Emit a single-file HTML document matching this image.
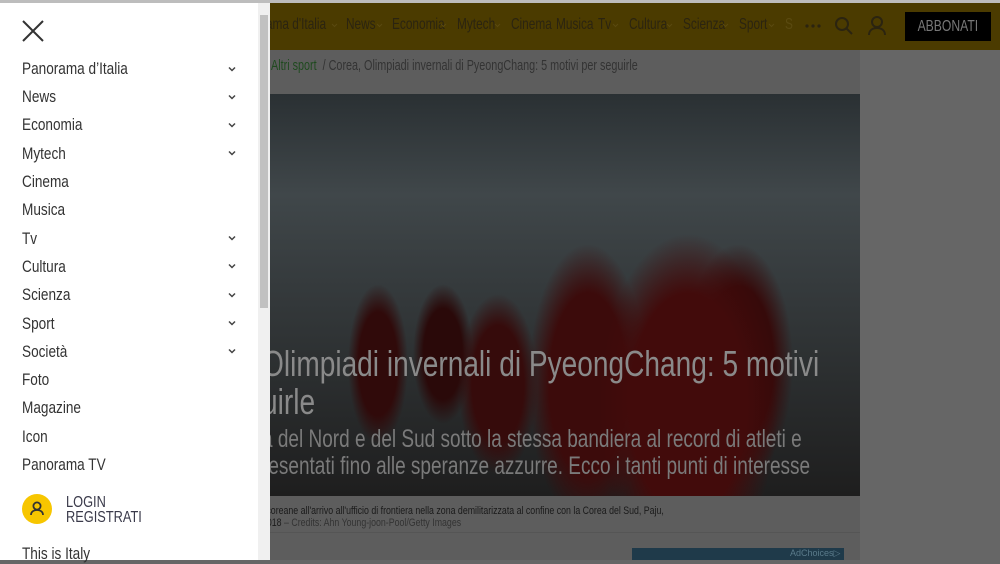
<!DOCTYPE html>
<html><head><meta charset="utf-8"><style>
*{margin:0;padding:0;box-sizing:border-box}
body{width:1000px;height:560px;overflow:hidden;background:#666;font-family:"Liberation Sans",sans-serif;position:relative}
.top{position:absolute;left:0;top:0;width:1000px;height:3px;background:#bdbdbd}
.hdr{position:absolute;left:258px;top:3px;width:742px;height:47px;background:#4b3b00}
.n{position:absolute;top:16px;font-size:16px;color:#2b2410;white-space:nowrap;transform:scaleX(.74);transform-origin:left}
.c{position:absolute;top:23px;width:7px;height:5px}
.btn{position:absolute;left:905px;top:12px;width:86px;height:29px;background:#000;color:#777;text-align:center;line-height:29px}
.btn span{display:inline-block;font-size:16px;transform:scaleX(.76)}
.content{position:absolute;left:258px;top:50px;width:602px;height:510px;background:#5d5d5d}
.crumb{position:absolute;left:262px;top:57px;font-size:15px;color:#333;white-space:nowrap;transform:scaleX(.72);transform-origin:left}
.crumb b{font-weight:normal;color:#1f4a1f}
.hero{position:absolute;left:258px;top:94px;width:602px;height:402px;overflow:hidden;
background:
radial-gradient(ellipse 90px 170px at 430px 310px,#420b0b 65%,transparent 100%),
radial-gradient(ellipse 60px 140px at 330px 290px,#3c0b0b 65%,transparent 100%),
radial-gradient(ellipse 55px 120px at 480px 270px,#360a0a 65%,transparent 100%),
radial-gradient(ellipse 40px 90px at 240px 290px,#360b0b 65%,transparent 100%),
radial-gradient(ellipse 30px 80px at 120px 270px,#300a0a 65%,transparent 100%),
radial-gradient(ellipse 30px 70px at 185px 260px,#2a0909 65%,transparent 100%),
linear-gradient(180deg,#2a3033 0%,#40474a 25%,#34393b 50%,#1e1e1e 100%)}
.hl{position:absolute;white-space:nowrap;color:#8a8a8a;transform-origin:left}
.menu{position:absolute;left:0;top:3px;width:258px;height:557px;background:#fff;z-index:5}
.sb{position:absolute;left:258px;top:3px;width:12px;height:557px;background:#f0f0f0;z-index:5}
.sb div{position:absolute;left:2px;top:12px;width:8px;height:293px;background:#c1c1c1}
.mi{position:absolute;left:22px;font-size:17px;color:#333;white-space:nowrap;transform:scaleX(.8);transform-origin:left}
.ch{position:absolute;left:227px;width:10px;height:10px}
</style></head><body>
<div class="top"></div>
<div class="hdr"></div>
<div class="n" style="left:262px">rama d'Italia</div>
<div class="n" style="left:346px">News</div>
<div class="n" style="left:392px">Economia</div>
<div class="n" style="left:457px">Mytech</div>
<div class="n" style="left:511px">Cinema</div>
<div class="n" style="left:556px">Musica</div>
<div class="n" style="left:598px">Tv</div>
<div class="n" style="left:629px">Cultura</div>
<div class="n" style="left:683px">Scienza</div>
<div class="n" style="left:739px">Sport</div>
<div class="n" style="left:785px;color:#5a4a10">S</div>
<svg class="c" style="left:331px" viewBox="0 0 7 5"><path d="M1 1l2.5 2.5L6 1" fill="none" stroke="#5a4a10"/></svg>
<svg class="c" style="left:376px" viewBox="0 0 7 5"><path d="M1 1l2.5 2.5L6 1" fill="none" stroke="#5a4a10"/></svg>
<svg class="c" style="left:440px" viewBox="0 0 7 5"><path d="M1 1l2.5 2.5L6 1" fill="none" stroke="#5a4a10"/></svg>
<svg class="c" style="left:494px" viewBox="0 0 7 5"><path d="M1 1l2.5 2.5L6 1" fill="none" stroke="#5a4a10"/></svg>
<svg class="c" style="left:612px" viewBox="0 0 7 5"><path d="M1 1l2.5 2.5L6 1" fill="none" stroke="#5a4a10"/></svg>
<svg class="c" style="left:666px" viewBox="0 0 7 5"><path d="M1 1l2.5 2.5L6 1" fill="none" stroke="#5a4a10"/></svg>
<svg class="c" style="left:722px" viewBox="0 0 7 5"><path d="M1 1l2.5 2.5L6 1" fill="none" stroke="#5a4a10"/></svg>
<svg class="c" style="left:768px" viewBox="0 0 7 5"><path d="M1 1l2.5 2.5L6 1" fill="none" stroke="#5a4a10"/></svg>
<svg style="position:absolute;left:805px;top:24px" width="16" height="4" viewBox="0 0 16 4"><circle cx="2" cy="2" r="1.6" fill="#2b2410"/><circle cx="8" cy="2" r="1.6" fill="#2b2410"/><circle cx="14" cy="2" r="1.6" fill="#2b2410"/></svg>
<svg style="position:absolute;left:834px;top:16px" width="20" height="20" viewBox="0 0 20 20"><circle cx="8" cy="8" r="6" fill="none" stroke="#2b2410" stroke-width="2"/><path d="M12.5 12.5L18 18" stroke="#2b2410" stroke-width="2"/></svg>
<svg style="position:absolute;left:867px;top:15px" width="20" height="22" viewBox="0 0 20 22"><circle cx="10" cy="7" r="5" fill="none" stroke="#2b2410" stroke-width="2"/><path d="M2 20c0-5 4-7 8-7s8 2 8 7" fill="none" stroke="#2b2410" stroke-width="2"/></svg>
<div class="btn"><span>ABBONATI</span></div>
<div class="content"></div>
<div class="crumb">/ &nbsp;<b>Altri sport</b> &nbsp;/ Corea, Olimpiadi invernali di PyeongChang: 5 motivi per seguirle</div>
<div class="hero"></div>
<div class="hl" style="left:262px;top:343px;font-size:36px;transform:scaleX(.78)">Olimpiadi invernali di PyeongChang: 5 motivi</div>
<div class="hl" style="left:262px;top:381px;font-size:36px;transform:scaleX(.78)">uirle</div>
<div class="hl" style="left:262px;top:425px;font-size:25px;color:#7a7a7a;transform:scaleX(.76)">a del Nord e del Sud sotto la stessa bandiera al record di atleti e</div>
<div class="hl" style="left:262px;top:452px;font-size:25px;color:#7a7a7a;transform:scaleX(.76)">resentati fino alle speranze azzurre. Ecco i tanti punti di interesse</div>
<div style="position:absolute;left:262px;top:505px;font-size:11px;color:#1a1a1a;line-height:12px;white-space:nowrap;transform:scaleX(.8);transform-origin:left">l coreane all'arrivo all'ufficio di frontiera nella zona demilitarizzata al confine con la Corea del Sud, Paju,<br>2018 <span style="color:#333">– Credits: Ahn Young-joon-Pool/Getty Images</span></div>
<div style="position:absolute;left:270px;top:532px;width:590px;height:1px;background:#555"></div>
<div style="position:absolute;left:632px;top:548px;width:212px;height:12px;background:#1f3a4a"></div>
<div style="position:absolute;left:790px;top:548px;font-size:9px;color:#5a7a8a">AdChoices▷</div>

<div class="menu">
<svg style="position:absolute;left:22px;top:17px" width="22" height="22" viewBox="0 0 22 22"><path d="M1 1L21 21M21 1L1 21" stroke="#333" stroke-width="2"/></svg>
</div>
<div class="sb"><div></div></div>
<div style="position:absolute;left:0;top:0;z-index:6">
<div class="mi" style="top:59px">Panorama d’Italia</div>
<div class="mi" style="top:87px">News</div>
<div class="mi" style="top:115px">Economia</div>
<div class="mi" style="top:144px">Mytech</div>
<div class="mi" style="top:172px">Cinema</div>
<div class="mi" style="top:200px">Musica</div>
<div class="mi" style="top:229px">Tv</div>
<div class="mi" style="top:257px">Cultura</div>
<div class="mi" style="top:285px">Scienza</div>
<div class="mi" style="top:314px">Sport</div>
<div class="mi" style="top:342px">Società</div>
<div class="mi" style="top:370px">Foto</div>
<div class="mi" style="top:398px">Magazine</div>
<div class="mi" style="top:427px">Icon</div>
<div class="mi" style="top:455px">Panorama TV</div>
<svg class="ch" style="top:64px" viewBox="0 0 10 10"><path d="M2 3.5L5 6.5 8 3.5" fill="none" stroke="#444" stroke-width="1.5"/></svg>
<svg class="ch" style="top:92px" viewBox="0 0 10 10"><path d="M2 3.5L5 6.5 8 3.5" fill="none" stroke="#444" stroke-width="1.5"/></svg>
<svg class="ch" style="top:120px" viewBox="0 0 10 10"><path d="M2 3.5L5 6.5 8 3.5" fill="none" stroke="#444" stroke-width="1.5"/></svg>
<svg class="ch" style="top:148px" viewBox="0 0 10 10"><path d="M2 3.5L5 6.5 8 3.5" fill="none" stroke="#444" stroke-width="1.5"/></svg>
<svg class="ch" style="top:233px" viewBox="0 0 10 10"><path d="M2 3.5L5 6.5 8 3.5" fill="none" stroke="#444" stroke-width="1.5"/></svg>
<svg class="ch" style="top:261px" viewBox="0 0 10 10"><path d="M2 3.5L5 6.5 8 3.5" fill="none" stroke="#444" stroke-width="1.5"/></svg>
<svg class="ch" style="top:290px" viewBox="0 0 10 10"><path d="M2 3.5L5 6.5 8 3.5" fill="none" stroke="#444" stroke-width="1.5"/></svg>
<svg class="ch" style="top:318px" viewBox="0 0 10 10"><path d="M2 3.5L5 6.5 8 3.5" fill="none" stroke="#444" stroke-width="1.5"/></svg>
<svg class="ch" style="top:346px" viewBox="0 0 10 10"><path d="M2 3.5L5 6.5 8 3.5" fill="none" stroke="#444" stroke-width="1.5"/></svg>
<div style="position:absolute;left:22px;top:494px;width:30px;height:30px;border-radius:50%;background:#f7c600"></div>
<svg style="position:absolute;left:27px;top:499px" width="20" height="20" viewBox="0 0 20 20"><circle cx="10" cy="7" r="3.6" fill="none" stroke="#333" stroke-width="1.8"/><path d="M4 16c0-3.5 3-5 6-5s6 1.5 6 5" fill="none" stroke="#333" stroke-width="1.8"/></svg>
<div class="mi" style="left:66px;top:495px;font-size:16px;line-height:15px;color:#3a3a4a">LOGIN<br>REGISTRATI</div>
<div class="mi" style="top:544px">This is Italy</div>
</div>
</body></html>
